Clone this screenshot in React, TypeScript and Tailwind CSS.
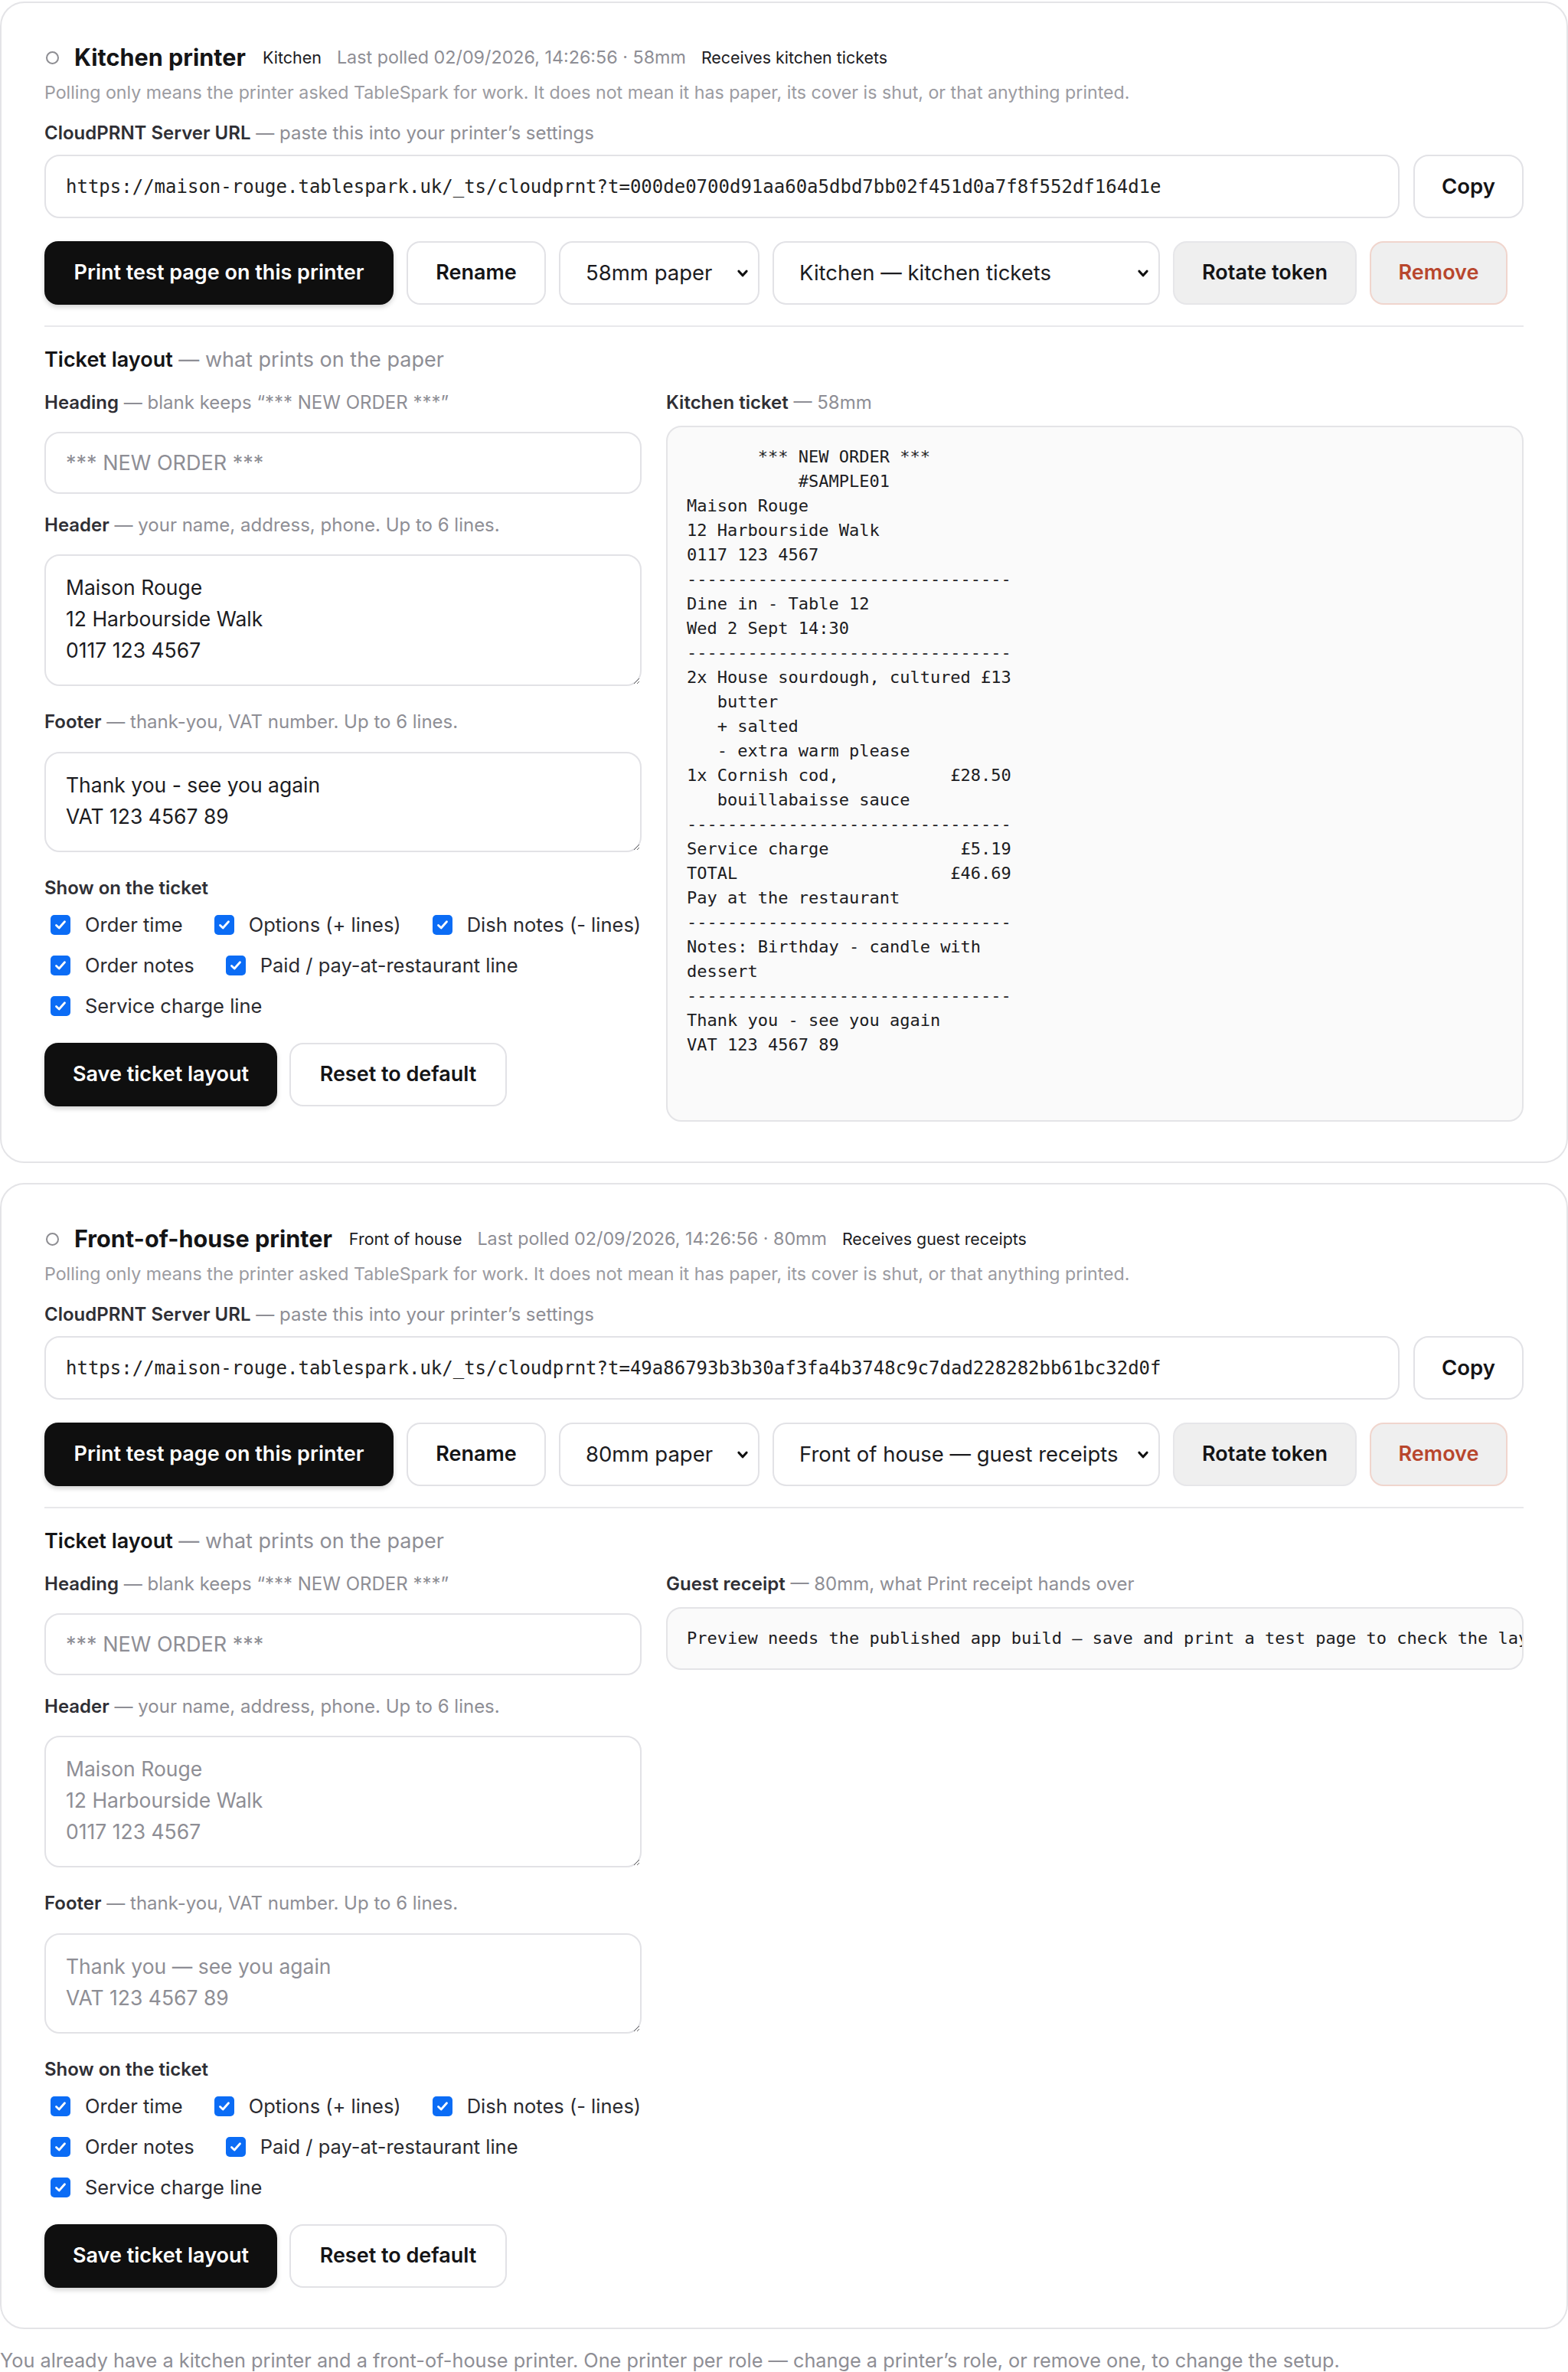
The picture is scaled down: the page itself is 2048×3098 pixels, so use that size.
import React from "react";

const KITCHEN_RECEIPT = `       *** NEW ORDER ***
           #SAMPLE01
Maison Rouge
12 Harbourside Walk
0117 123 4567
--------------------------------
Dine in - Table 12
Wed 2 Sept 14:30
--------------------------------
2x House sourdough, cultured £13
   butter
   + salted
   - extra warm please
1x Cornish cod,           £28.50
   bouillabaisse sauce
--------------------------------
Service charge             £5.19
TOTAL                     £46.69
Pay at the restaurant
--------------------------------
Notes: Birthday - candle with
dessert
--------------------------------
Thank you - see you again
VAT 123 4567 89`;

type Printer = {
  name: string;
  tag: string;
  polled: string;
  receives: string;
  token: string;
  paper: string;
  role: string;
  previewTitle: string;
  previewNote: string;
  headerValue: string;
  footerValue: string;
  headerPlaceholder: string;
  footerPlaceholder: string;
};

const printers: Printer[] = [
  {
    name: "Kitchen printer",
    tag: "Kitchen",
    polled: "Last polled 02/09/2026, 14:26:56 · 58mm",
    receives: "Receives kitchen tickets",
    token: "000de0700d91aa60a5dbd7bb02f451d0a7f8f552df164d1e",
    paper: "58mm paper",
    role: "Kitchen — kitchen tickets",
    previewTitle: "Kitchen ticket",
    previewNote: "58mm",
    headerValue: "Maison Rouge\n12 Harbourside Walk\n0117 123 4567",
    footerValue: "Thank you - see you again\nVAT 123 4567 89",
    headerPlaceholder: "",
    footerPlaceholder: "",
  },
  {
    name: "Front-of-house printer",
    tag: "Front of house",
    polled: "Last polled 02/09/2026, 14:26:56 · 80mm",
    receives: "Receives guest receipts",
    token: "49a86793b3b30af3fa4b3748c9c7dad228282bb61bc32d0f",
    paper: "80mm paper",
    role: "Front of house — guest receipts",
    previewTitle: "Guest receipt",
    previewNote: "80mm, what Print receipt hands over",
    headerValue: "",
    footerValue: "",
    headerPlaceholder: "Maison Rouge\n12 Harbourside Walk\n0117 123 4567",
    footerPlaceholder: "Thank you — see you again\nVAT 123 4567 89",
  },
];

function Label({ strong, rest }: { strong: string; rest: string }) {
  return (
    <div className="text-[24px] leading-[30px] text-[#8e8e95]">
      <span className="font-semibold text-[#2f2f35]">{strong}</span> — {rest}
    </div>
  );
}

function Chevron() {
  return (
    <svg width="18" height="18" viewBox="0 0 16 16" className="pointer-events-none absolute right-[13px] top-1/2 -translate-y-1/2">
      <path d="M3.5 5.5 L8 10.5 L12.5 5.5" fill="none" stroke="#111" strokeWidth="2.8" strokeLinecap="round" strokeLinejoin="round" />
    </svg>
  );
}

function Select({ value, options, width }: { value: string; options: string[]; width: string }) {
  return (
    <div className={`relative ${width}`}>
      <select
        defaultValue={value}
        className="h-[83px] w-full appearance-none rounded-[18px] border-2 border-[#e2e2e6] bg-white pl-[33px] pr-[44px] text-[27.5px] text-[#1c1c1f] outline-none"
      >
        {options.map((o) => (
          <option key={o}>{o}</option>
        ))}
      </select>
      <Chevron />
    </div>
  );
}

function Check({ label }: { label: string }) {
  return (
    <label className="flex items-center gap-[19px]">
      <span className="ml-[8px] flex h-[26px] w-[26px] items-center justify-center rounded-[5px] bg-[#0b6cf5]">
        <svg width="18" height="18" viewBox="0 0 18 18">
          <path d="M3.5 9.5 L7.2 13 L14.5 4.8" fill="none" stroke="white" strokeWidth="2.8" strokeLinecap="round" strokeLinejoin="round" />
        </svg>
      </span>
      <span className="text-[25.5px] leading-[30px] text-[#2b2b30]">{label}</span>
    </label>
  );
}

function PrinterCard({ p, kitchen }: { p: Printer; kitchen: boolean }) {
  const url = `https://maison-rouge.tablespark.uk/_ts/cloudprnt?t=${p.token}`;
  return (
    <section className="rounded-[32px] border-2 border-[#e4e4e7] bg-white px-[56px] pb-[52px] pt-[51px]">
      {/* title row */}
      <div className="flex items-center">
        <span className="mr-[20px] ml-[2px] h-[17px] w-[17px] rounded-full border-2 border-[#8d8d92]" />
        <h2 className="text-[30.6px] font-bold leading-[40px] text-[#141416]">{p.name}</h2>
        <span className="ml-[22px] text-[21.5px] text-[#1c1c1f]">{p.tag}</span>
        <span className="ml-[20px] text-[23.3px] text-[#8e8e95]">{p.polled}</span>
        <span className="ml-[20px] text-[21.4px] text-[#1c1c1f]">{p.receives}</span>
      </div>
      <p className="mt-[10px] text-[23.2px] leading-[32px] text-[#9b9ba1]">
        Polling only means the printer asked TableSpark for work. It does not mean it has paper, its cover is shut, or that anything printed.
      </p>

      <div className="mt-[22px]">
        <Label strong="CloudPRNT Server URL" rest="paste this into your printer’s settings" />
      </div>
      <div className="mt-[13px] flex gap-[18px]">
        <input
          readOnly
          value={url}
          className="h-[83px] flex-1 rounded-[20px] border-2 border-[#e2e2e6] bg-white px-[26px] font-['DejaVu_Sans_Mono',monospace] text-[24px] text-[#222] outline-none"
        />
        <button className="h-[83px] w-[144px] rounded-[20px] border-2 border-[#e2e2e6] bg-white text-[27.5px] font-semibold text-[#141416]">
          Copy
        </button>
      </div>

      <div className="mt-[30px] flex gap-[17px]">
        <button className="h-[83px] w-[456px] rounded-[18px] bg-[#0f0f0f] text-[27px] font-semibold text-white shadow-[0_3px_6px_rgba(0,0,0,0.18)]">
          Print test page on this printer
        </button>
        <button className="h-[83px] w-[182px] rounded-[18px] border-2 border-[#e2e2e6] bg-white text-[27px] font-semibold text-[#141416]">
          Rename
        </button>
        <Select value={p.paper} options={["58mm paper", "80mm paper"]} width="w-[262px]" />
        <Select
          value={p.role}
          options={["Kitchen — kitchen tickets", "Front of house — guest receipts"]}
          width="w-[506px]"
        />
        <button className="h-[83px] w-[240px] rounded-[18px] border-2 border-[#e6e6e9] bg-[#efefef] text-[27px] font-semibold text-[#141416]">
          Rotate token
        </button>
        <button className="h-[83px] w-[180px] rounded-[18px] border-2 border-[#f0d5cd] bg-[#efefef] text-[27px] font-semibold text-[#b8462d]">
          Remove
        </button>
      </div>

      <div className="mt-[27px] border-t-2 border-[#e8e8eb]" />

      <div className="mt-[25px] text-[27px] leading-[36px] text-[#8e8e95]">
        <span className="font-semibold text-[#141416]">Ticket layout</span> — what prints on the paper
      </div>

      <div className="mt-[23px] grid grid-cols-[780px_minmax(0,1fr)] items-start gap-[32px]">
        {/* left: form */}
        <div className="flex flex-col">
          <Label strong="Heading" rest="blank keeps “*** NEW ORDER ***”" />
          <input
            placeholder="*** NEW ORDER ***"
            className="mt-[23px] h-[81px] rounded-[20px] border-2 border-[#e2e2e6] bg-white px-[26px] text-[27px] text-[#1c1c1f] outline-none placeholder:text-[#8e8e95]"
          />

          <div className="mt-[26px]">
            <Label strong="Header" rest="your name, address, phone. Up to 6 lines." />
          </div>
          <textarea
            defaultValue={p.headerValue}
            placeholder={p.headerPlaceholder}
            className="mt-[23px] h-[172px] resize-y rounded-[20px] border-2 border-[#e2e2e6] bg-white px-[26px] py-[21px] text-[26.5px] leading-[41px] text-[#1c1c1f] outline-none placeholder:text-[#8e8e95]"
          />

          <div className="mt-[32px]">
            <Label strong="Footer" rest="thank-you, VAT number. Up to 6 lines." />
          </div>
          <textarea
            defaultValue={p.footerValue}
            placeholder={p.footerPlaceholder}
            className="mt-[24px] h-[131px] resize-y rounded-[20px] border-2 border-[#e2e2e6] bg-white px-[26px] py-[21px] text-[26.5px] leading-[41px] text-[#1c1c1f] outline-none placeholder:text-[#8e8e95]"
          />

          <div className="mt-[32px] text-[24px] font-semibold leading-[30px] text-[#2f2f35]">Show on the ticket</div>
          <div className="mt-[18px] flex flex-col gap-[23px]">
            <div className="flex gap-[33px]">
              <Check label="Order time" />
              <Check label="Options (+ lines)" />
              <Check label="Dish notes (- lines)" />
            </div>
            <div className="flex gap-[33px]">
              <Check label="Order notes" />
              <Check label="Paid / pay-at-restaurant line" />
            </div>
            <div className="flex gap-[33px]">
              <Check label="Service charge line" />
            </div>
          </div>

          <div className="mt-[33px] flex gap-[16px]">
            <button className="h-[83px] w-[304px] rounded-[18px] bg-[#0f0f0f] text-[27px] font-semibold text-white shadow-[0_3px_6px_rgba(0,0,0,0.18)]">
              Save ticket layout
            </button>
            <button className="h-[83px] w-[284px] rounded-[18px] border-2 border-[#e2e2e6] bg-white text-[27px] font-semibold text-[#141416]">
              Reset to default
            </button>
          </div>
        </div>

        {/* right: preview */}
        <div className="flex min-w-0 flex-col">
          <Label strong={p.previewTitle} rest={p.previewNote} />
          {kitchen ? (
            <pre className="mt-[15px] min-h-[909px] rounded-[20px] border-2 border-[#e4e4e7] bg-[#fafafa] px-[25px] pt-[23px] font-['DejaVu_Sans_Mono',monospace] text-[22px] leading-[32px] text-[#1c1c1f]">
              {KITCHEN_RECEIPT}
            </pre>
          ) : (
            <pre className="mt-[15px] h-[82px] overflow-hidden whitespace-pre rounded-[20px] border-2 border-[#e4e4e7] bg-[#fafafa] px-[25px] pt-[23px] font-['DejaVu_Sans_Mono',monospace] text-[22px] leading-[32px] text-[#1c1c1f]">
              Preview needs the published app build — save and print a test page to check the layout.
            </pre>
          )}
        </div>
      </div>
    </section>
  );
}

export default function App() {
  return (
    <div className="min-h-screen bg-white font-['Inter','Noto_Sans',sans-serif]">
      <div className="flex flex-col gap-[26px] pt-[2px]">
        {printers.map((p, i) => (
          <PrinterCard key={p.name} p={p} kitchen={i === 0} />
        ))}
      </div>
      <p className="mt-[26px] text-[25.3px] leading-[30px] text-[#8e8e95]">
        You already have a kitchen printer and a front-of-house printer. One printer per role — change a printer’s role, or remove one, to change the setup.
      </p>
    </div>
  );
}
